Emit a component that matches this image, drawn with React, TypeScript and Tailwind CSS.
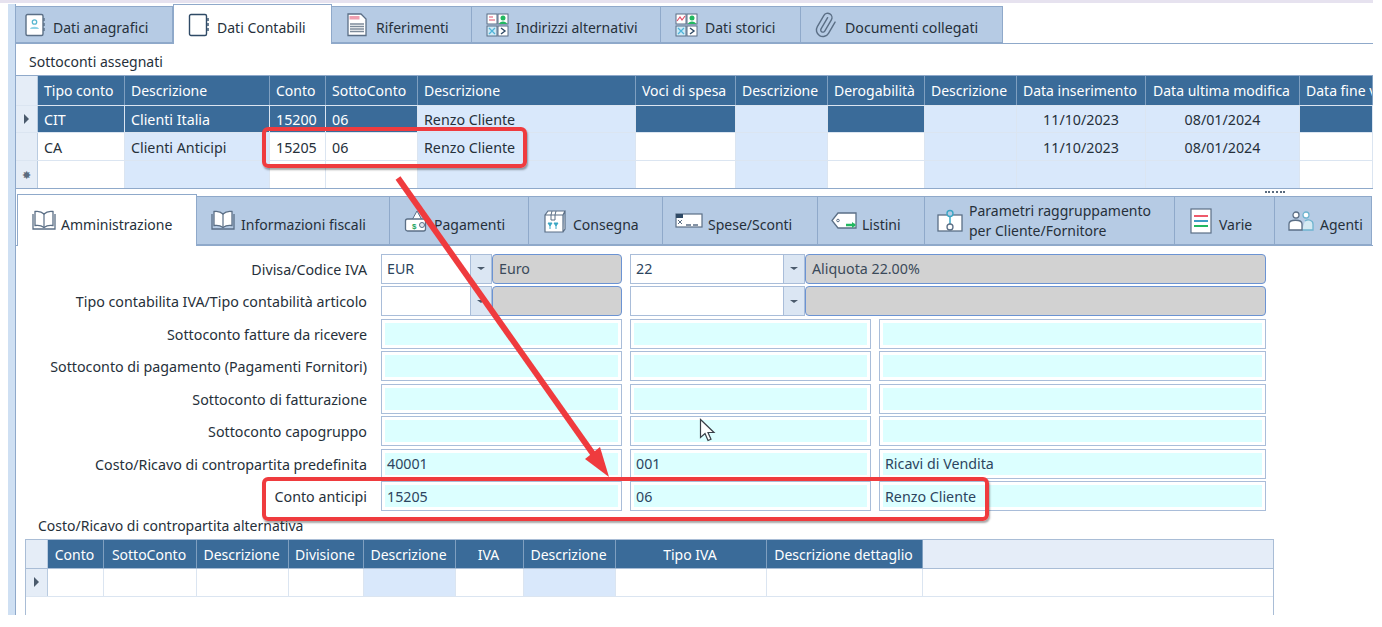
import { Paperclip } from "lucide-react";
import type { ReactNode } from "react";

const ink = "#5b6f86";

const AddressBookIcon = () => (
  <svg width="22" height="24" viewBox="0 0 22 24" fill="none">
    <rect x="2" y="1.5" width="17" height="21" rx="1.5" fill="#fff" stroke={ink} strokeWidth="1.4" />
    <path d="M20 5v3M20 10v3M20 15v3" stroke={ink} strokeWidth="1.4" />
    <circle cx="10.5" cy="9" r="2.2" fill="none" stroke="#58b7d0" strokeWidth="1.3" />
    <path d="M6 16c.6-3 8.4-3 9 0z" fill="#8fd3e6" />
  </svg>
);

const NotebookIcon = () => (
  <svg width="22" height="24" viewBox="0 0 22 24" fill="none">
    <rect x="1.5" y="1.5" width="17" height="21" rx="1.5" fill="#fff" stroke="#2f4a66" strokeWidth="1.4" />
    <path d="M20 5v3M20 10v3M20 15v3" stroke="#2f4a66" strokeWidth="1.4" />
  </svg>
);

const DocumentIcon = () => (
  <svg width="22" height="24" viewBox="0 0 22 24" fill="none">
    <path d="M2 1h13l5 5v16.500H2z" fill="#fff" stroke={ink} strokeWidth="1.3" />
    <rect x="3.500" y="3" width="10" height="3.500" fill="#ef9fb0" />
    <path d="M4 11h14M4 13.500h14M4 16h14M4 18.500h14" stroke="#7d8b9a" strokeWidth="1.500" />
  </svg>
);

const TilesIcon = ({ chart }: { chart?: boolean }) => (
  <svg width="23" height="24" viewBox="0 0 23 24" fill="none">
    <rect x="1" y="1" width="10" height="10" fill="#fff" stroke={ink} />
    <rect x="12" y="1" width="10" height="10" fill="#fff" stroke={ink} />
    <rect x="1" y="13" width="10" height="10" fill="#cfeaf7" stroke={ink} />
    <rect x="12" y="13" width="10" height="10" fill="#fff" stroke={ink} />
    <path d={chart ? "M2 8l3-4 2 3 3-4" : "M3 4h4M3 7h6"} stroke="#e2506a" strokeWidth="1.2" />
    <circle cx="17" cy="5" r="2.500" fill="#22b860" />
    <path d="M13 11c.5-3.500 7.500-3.500 8 0z" fill="#22b860" />
    <path d="M3 15l6 6M9 15l-6 6" stroke="#4fb3d9" strokeWidth="1.3" />
    <path d="M15 15l4 3-4 3" stroke="#2f4a66" strokeWidth="1.4" />
  </svg>
);

const OpenBookIcon = () => (
  <svg width="24" height="22" viewBox="0 0 24 22" fill="none">
    <path d="M12 4C9.500 1.500 6 1 3 1.500v14c3-.5 6.500 0 9 2 2.500-2 6-2.500 9-2v-14C18 1 14.500 1.500 12 4z" fill="#fff" stroke={ink} strokeWidth="1.3" />
    <path d="M12 4v13.500" stroke={ink} strokeWidth="1.2" />
    <path d="M1 4v15h22V4" stroke={ink} strokeWidth="1.3" />
  </svg>
);

const WalletIcon = () => (
  <svg width="24" height="24" viewBox="0 0 24 24" fill="none">
    <path d="M8 11l5-9 5 9z" fill="#fff" stroke={ink} />
    <rect x="1.500" y="10" width="20" height="12" rx="2" fill="#fff" stroke={ink} strokeWidth="1.3" />
    <text x="8" y="20" fontSize="8" fontWeight="700" fill="#22a45d" fontFamily="'Liberation Sans', sans-serif">$</text>
    <circle cx="18" cy="16" r="2.500" fill="#dfe7ef" stroke={ink} />
  </svg>
);

const BoxIcon = () => (
  <svg width="24" height="24" viewBox="0 0 24 24" fill="none">
    <path d="M2 6h18v17H2zM2 6l3-4h17l-2 4M20 23l2-3V2" fill="#fff" stroke={ink} strokeWidth="1.2" />
    <path d="M8 6v5h4V6M8 6l1-4M12 6l1-4" stroke={ink} />
    <path d="M5 14h4l-2 3zM11 14h4l-2 3zM7 17v3M13 17v3" fill="#3aa6c4" stroke="#3aa6c4" />
  </svg>
);

const CardIcon = () => (
  <svg width="28" height="16" viewBox="0 0 28 16" fill="none">
    <rect x="1" y="1" width="26" height="13" fill="#fff" stroke={ink} strokeWidth="1.2" />
    <rect x="1" y="1" width="7" height="4" fill="#2f4a66" />
    <path d="M3 7l4 4M7 7l-4 4" stroke={ink} />
    <path d="M11 12h5M18 12h5" stroke={ink} strokeWidth="1.500" />
  </svg>
);

const TagIcon = () => (
  <svg width="26" height="18" viewBox="0 0 26 18" fill="none">
    <path d="M7 1h18v15H7L1 8.500z" fill="#fff" stroke={ink} strokeWidth="1.3" />
    <circle cx="7" cy="8.500" r="1.300" stroke={ink} />
    <path d="M15 13h9" stroke="#22b860" strokeWidth="2.500" />
    <path d="M21 10l4 3-4 3z" fill="#22b860" />
  </svg>
);

const ParamsIcon = () => (
  <svg width="26" height="24" viewBox="0 0 26 24" fill="none">
    <rect x="1" y="6" width="24" height="16" fill="#fff" stroke={ink} strokeWidth="1.3" />
    <circle cx="13" cy="4.500" r="3" fill="#b6cbe3" stroke="#3aa6c4" strokeWidth="1.400" />
    <path d="M13 8v7" stroke="#3aa6c4" strokeWidth="1.500" />
    <circle cx="13" cy="18" r="3" stroke={ink} strokeWidth="1.300" />
  </svg>
);

const ListIcon = () => (
  <svg width="22" height="26" viewBox="0 0 22 26" fill="none">
    <rect x="1" y="1" width="20" height="24" fill="#fff" stroke={ink} strokeWidth="1.200" />
    <path d="M4 8h14" stroke="#ef5a6a" strokeWidth="2" />
    <path d="M4 13h14" stroke="#3f9cc4" strokeWidth="2" />
    <path d="M4 18h14" stroke="#22b860" strokeWidth="2" />
  </svg>
);

const PeopleIcon = () => (
  <svg width="26" height="22" viewBox="0 0 26 22" fill="none">
    <circle cx="8" cy="5" r="3" fill="#fff" stroke={ink} strokeWidth="1.300" />
    <circle cx="18" cy="5" r="3" fill="#fff" stroke="#6fb4cf" strokeWidth="1.300" />
    <path d="M14 20h11v-6c0-4-5-5-8-3" fill="#d5eaf3" stroke="#6fb4cf" strokeWidth="1.300" />
    <path d="M1 20v-6c0-5 13-5 13 0v6z" fill="#fff" stroke={ink} strokeWidth="1.300" />
  </svg>
);

type TabProps = {
  label: ReactNode;
  icon: ReactNode;
  active?: boolean;
  width: string;
  iconGap?: string;
  offset: string;
  labelPad?: string;
};

const Tab = ({ label, icon, active, width, iconGap = "gap-[7px]", offset, labelPad = "pt-[6px]" }: TabProps) =>
  active ? (
    <div className={`${width} ${offset} flex items-center ${iconGap} self-stretch bg-white border-x border-t border-[#8fa9ca] whitespace-nowrap leading-[20px] text-[#26303a]`}>
      <span className="shrink-0 flex">{icon}</span>
      <span className={labelPad}>{label}</span>
    </div>
  ) : (
    <div className={`${width} ${offset} flex items-center ${iconGap} self-end bg-[#b6cbe4] border-r border-t border-b border-[#8fa9ca] whitespace-nowrap leading-[20px] text-[#26303a]`}>
      <span className="shrink-0 flex">{icon}</span>
      <span className={labelPad}>{label}</span>
    </div>
  );

type Col = { w: string; label: string; shade?: boolean; dark?: boolean; center?: boolean; r1?: string; r2?: string };

const mainCols: Col[] = [
  { w: "w-[87px]", label: "Tipo conto", dark: true, r1: "CIT", r2: "CA" },
  { w: "w-[145px]", label: "Descrizione", shade: true, dark: true, r1: "Clienti Italia", r2: "Clienti Anticipi" },
  { w: "w-[56px]", label: "Conto", dark: true, r1: "15200", r2: "15205" },
  { w: "w-[92px]", label: "SottoConto", dark: true, r1: "06", r2: "06" },
  { w: "w-[218px]", label: "Descrizione", shade: true, r1: "Renzo Cliente", r2: "Renzo Cliente" },
  { w: "w-[100px]", label: "Voci di spesa", dark: true },
  { w: "w-[92px]", label: "Descrizione", shade: true },
  { w: "w-[97px]", label: "Derogabilità", dark: true },
  { w: "w-[92px]", label: "Descrizione", shade: true },
  { w: "w-[129px]", label: "Data inserimento", shade: true, center: true, r1: "11/10/2023", r2: "11/10/2023" },
  { w: "w-[154px]", label: "Data ultima modifica", shade: true, center: true, r1: "08/01/2024", r2: "08/01/2024" },
  { w: "w-[73px]", label: "Data fine validità", dark: true },
];

const altCols: Col[] = [
  { w: "w-[56px]", label: "Conto", center: true },
  { w: "w-[93px]", label: "SottoConto", center: true },
  { w: "w-[92px]", label: "Descrizione", center: true },
  { w: "w-[75px]", label: "Divisione", center: true },
  { w: "w-[92px]", label: "Descrizione", shade: true, center: true },
  { w: "w-[68px]", label: "IVA", center: true },
  { w: "w-[92px]", label: "Descrizione", shade: true, center: true },
  { w: "w-[151px]", label: "Tipo IVA", center: true },
  { w: "w-[156px]", label: "Descrizione dettaglio", center: true },
];

const HeaderCell = ({ col, extra = "" }: { col: Col; extra?: string }) => (
  <div className={`${col.w} ${extra} shrink-0 h-full flex items-center overflow-hidden whitespace-nowrap bg-[#3a6b99] text-white border-r border-[#7f9fc0] ${col.center ? "justify-center pr-[2px]" : "pl-[6px]"}`}>
    {col.label}
  </div>
);

const Cell = ({ col, text, selected }: { col: Col; text?: string; selected?: boolean }) => {
  const bg = selected && col.dark ? "bg-[#3a6b99] text-white" : col.shade ? "bg-[#d9e8fb] text-[#26303a]" : "bg-white text-[#26303a]";
  return (
    <div className={`${col.w} ${bg} shrink-0 h-full flex items-center overflow-hidden whitespace-nowrap border-r border-[#dbe5f1] pt-[2px] text-[14.25px] ${col.center ? "justify-center" : "pl-[6px]"}`}>
      {text}
    </div>
  );
};

const Marker = ({ glyph }: { glyph?: "arrow" | "star" }) => (
  <div className="w-[22px] shrink-0 h-full flex items-center justify-center bg-[#e5edf7] border-r border-[#b9cbe0]">
    {glyph === "arrow" && <div className="w-0 h-0 border-y-[5px] border-y-transparent border-l-[5px] border-l-[#4a5a6c]" />}
    {glyph === "star" && <span className="text-[11px] leading-none text-[#5a6b7e]">✸</span>}
  </div>
);

const MainTable = () => (
  <div className="w-[1357px] h-[114px] border-y border-[#8fa9ca] overflow-hidden">
    <div className="flex h-[30px] border-b border-[#dbe5f1]">
      <Marker />
      {mainCols.map((c, i) => <HeaderCell key={i} col={c} />)}
    </div>
    <div className="flex h-[27px] border-b border-[#dbe5f1]">
      <Marker glyph="arrow" />
      {mainCols.map((c, i) => <Cell key={i} col={c} text={c.r1} selected />)}
    </div>
    <div className="flex h-[28px] border-b border-[#dbe5f1]">
      <Marker />
      {mainCols.map((c, i) => <Cell key={i} col={c} text={c.r2} />)}
    </div>
    <div className="flex h-[27px]">
      <Marker glyph="star" />
      {mainCols.map((c, i) => <Cell key={i} col={c} />)}
    </div>
  </div>
);

const AltTable = () => (
  <div className="ml-[9px] w-[1249px] h-[76px] border-x border-t border-[#a9bdd6]">
    <div className="flex h-[29px] border-b border-[#a9bdd6]">
      <Marker />
      {altCols.map((c, i) => <HeaderCell key={i} col={c} extra="pt-[2px]" />)}
      <div className="flex-1 bg-[#e5edf8]" />
    </div>
    <div className="flex h-[28px] border-b border-[#dbe5f1]">
      <Marker glyph="arrow" />
      {altCols.map((c, i) => <Cell key={i} col={c} />)}
    </div>
  </div>
);

const Field = ({ w, value }: { w: string; value?: string }) => (
  <div className={`${w} h-[30px] shrink-0 border border-[#a9bdd9] bg-white p-[3px]`}>
    <div className="h-full bg-[#dcffff] flex items-center pl-[2px] pt-px text-[14.25px] text-[#2c4560] whitespace-nowrap">{value}</div>
  </div>
);

const Combo = ({ w, value }: { w: string; value?: string }) => (
  <div className={`${w} h-[30px] shrink-0 flex border border-[#a9bdd9] bg-white`}>
    <div className="flex-1 flex items-center pl-[5px] pt-px text-[14.25px] text-[#2c4560]">{value}</div>
    <div className="w-[21px] bg-[#dbe6f3] border-l border-[#a9bdd9] flex items-center justify-center">
      <div className="w-0 h-0 border-x-[4px] border-x-transparent border-t-[3px] border-t-[#4a5a6c]" />
    </div>
  </div>
);

const Locked = ({ value }: { value?: string }) => (
  <div className="flex-1 h-[30px] rounded-[4px] border border-[#6b93d3] bg-[#d2d2d2] flex items-center pl-[6px] pt-px text-[14.25px] text-[#3b4a5a]">
    {value}
  </div>
);

const FormRow = ({ label, children }: { label: string; children: ReactNode }) => (
  <div className="flex items-center h-[29px]">
    <div className="w-[351px] shrink-0 text-right whitespace-nowrap pt-[2px] text-[14.25px] text-[#26303a]">{label}</div>
    <div className="ml-[14px] flex items-center">{children}</div>
  </div>
);

const TripleRow = ({ label, a, b, c }: { label: string; a?: string; b?: string; c?: string }) => (
  <FormRow label={label}>
    <div className="flex gap-[8px]">
      <Field w="w-[241px]" value={a} />
      <Field w="w-[241px]" value={b} />
      <Field w="w-[387px]" value={c} />
    </div>
  </FormRow>
);

const Overlays = () => (
  <>
    <div className="absolute left-[262px] top-[127px] w-[265px] h-[41px] rounded-[6px] border-[4px] border-[#ef3b3e] shadow-[1px_2px_2px_rgba(0,0,0,0.35)]" />
    <div className="absolute left-[262px] top-[477px] w-[727px] h-[44px] rounded-[6px] border-[4px] border-[#ef3b3e] shadow-[1px_2px_2px_rgba(0,0,0,0.35)]" />
    <svg className="absolute left-[380px] top-[170px]" width="240" height="315" viewBox="380 170 240 315" fill="none">
      <path d="M398 178L603 468" stroke="#ef3b3e" strokeWidth="6" />
      <path d="M600 447L609 477L585 459z" fill="#ef3b3e" />
    </svg>
    <svg className="absolute left-[699px] top-[418px]" width="17" height="25" viewBox="0 0 17 25">
      <path d="M1.500 1.500v18l4.500-4 3 7 3-1.300-3-6.700h6z" fill="#fff" stroke="#3a4048" strokeWidth="1.200" />
    </svg>
  </>
);

export default function App() {
  return (
    <div className="relative w-[1382px] h-[627px] overflow-hidden bg-white font-['Noto_Sans',sans-serif] text-[14px]">
      <div className="w-[1373px] h-[3px] bg-[#e6e2ef]" />
      <div className="flex h-[612px] pt-px">
        <div className="w-[8px] shrink-0" />
        <div className="w-[8px] shrink-0 bg-[#cfe0f3] border-r border-[#8fa9ca]" />
        <div className="w-[1357px] shrink-0">
          <div className="flex h-[40px] border-b border-[#8fa9ca] -mb-px">
            <Tab width="w-[157px]" offset="pl-[8px] h-[37px]" label="Dati anagrafici" icon={<AddressBookIcon />} />
            <Tab width="w-[159px]" offset="pl-[14px] h-[40px]" label="Dati Contabili" icon={<NotebookIcon />} active />
            <Tab width="w-[140px]" offset="pl-[14px] h-[37px]" iconGap="gap-[8px]" label="Riferimenti" icon={<DocumentIcon />} />
            <Tab width="w-[189px]" offset="pl-[14px] h-[37px]" iconGap="gap-[7px]" label="Indirizzi alternativi" icon={<TilesIcon />} />
            <Tab width="w-[140px]" offset="pl-[14px] h-[37px]" iconGap="gap-[7px]" label="Dati storici" icon={<TilesIcon chart />} />
            <Tab width="w-[202px]" offset="pl-[11px] h-[37px]" iconGap="gap-[7px]" label={<span className="text-[14.2px]">Documenti collegati</span>} icon={<Paperclip size={26} color={ink} strokeWidth={1.3} className="-rotate-[14deg]" />} />
          </div>

          <div className="h-[32px] pl-[13px] pt-[9px] leading-[20px] text-[#26303a]">Sottoconti assegnati</div>
          <MainTable />

          <div className="h-[5px] flex justify-end pr-[88px] pt-[2px]">
            <div className="w-[20px] border-t-2 border-dotted border-[#5a6b7e]" />
          </div>

          <div className="flex h-[52px] border-b border-[#8fa9ca]">
            <Tab width="w-[180px] ml-px" offset="pl-[14px] h-[52px]" iconGap="gap-[5px]" labelPad="pt-[8px]" label="Amministrazione" icon={<OpenBookIcon />} active />
            <Tab width="w-[193px]" offset="pl-[14px] h-[49px]" iconGap="gap-[6px]" labelPad="pt-[8px]" label="Informazioni fiscali" icon={<OpenBookIcon />} />
            <Tab width="w-[139px]" offset="pl-[14px] h-[49px]" iconGap="gap-[6px]" labelPad="pt-[8px]" label="Pagamenti" icon={<WalletIcon />} />
            <Tab width="w-[134px]" offset="pl-[14px] h-[49px]" iconGap="gap-[6px]" labelPad="pt-[8px]" label="Consegna" icon={<BoxIcon />} />
            <Tab width="w-[155px]" offset="pl-[12px] h-[49px]" iconGap="gap-[5px]" labelPad="pt-[8px]" label="Spese/Sconti" icon={<CardIcon />} />
            <Tab width="w-[107px]" offset="pl-[13px] h-[49px]" iconGap="gap-[5px]" labelPad="pt-[8px]" label="Listini" icon={<TagIcon />} />
            <Tab width="w-[250px]" offset="pl-[12px] h-[49px]" iconGap="gap-[6px]" labelPad="pt-0" label={<>Parametri raggruppamento<br />per Cliente/Fornitore</>} icon={<ParamsIcon />} />
            <Tab width="w-[100px]" offset="pl-[15px] h-[49px]" iconGap="gap-[7px]" labelPad="pt-[8px]" label="Varie" icon={<ListIcon />} />
            <Tab width="w-[97px]" offset="pl-[13px] h-[49px]" iconGap="gap-[6px]" labelPad="pt-[8px]" label="Agenti" icon={<PeopleIcon />} />
          </div>

          <div className="flex flex-col gap-[3.5px] pt-[8px]">
            <FormRow label="Divisa/Codice IVA">
              <Combo w="w-[111px]" value="EUR" />
              <div className="w-[130px] flex"><Locked value="Euro" /></div>
              <div className="w-[8px]" />
              <Combo w="w-[175px]" value="22" />
              <div className="w-[461px] flex"><Locked value="Aliquota 22.00%" /></div>
            </FormRow>
            <FormRow label="Tipo contabilita IVA/Tipo contabilità articolo">
              <Combo w="w-[111px]" />
              <div className="w-[130px] flex"><Locked /></div>
              <div className="w-[8px]" />
              <Combo w="w-[175px]" />
              <div className="w-[461px] flex"><Locked /></div>
            </FormRow>
            <TripleRow label="Sottoconto fatture da ricevere" />
            <TripleRow label="Sottoconto di pagamento (Pagamenti Fornitori)" />
            <TripleRow label="Sottoconto di fatturazione" />
            <TripleRow label="Sottoconto capogruppo" />
            <TripleRow label="Costo/Ricavo di contropartita predefinita" a="40001" b="001" c="Ricavi di Vendita" />
            <TripleRow label="Conto anticipi" a="15205" b="06" c="Renzo Cliente" />
          </div>

          <div className="h-[28px] pl-[22px] pt-[5px] leading-[20px] text-[#26303a]">Costo/Ricavo di contropartita alternativa</div>
          <AltTable />
        </div>
      </div>
      <Overlays />
    </div>
  );
}
